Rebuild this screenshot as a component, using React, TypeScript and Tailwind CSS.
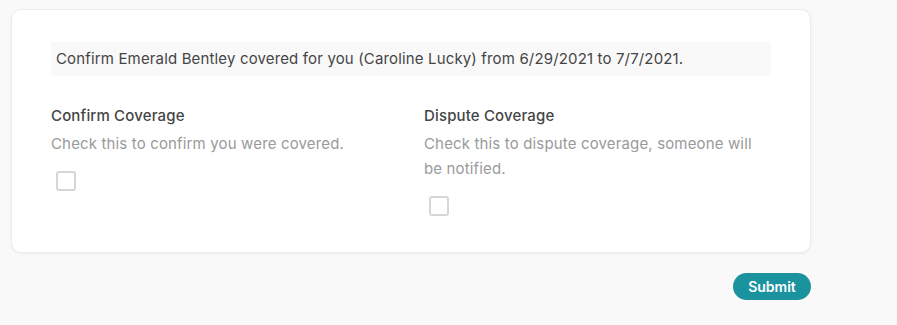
import React from 'react';

const App: React.FC = () => {
  return (
    <div className="min-h-screen w-full bg-[#f9f9f9] pl-[11px] pt-[9px] font-['Inter',sans-serif] tracking-[0.15px]">
      <div className="w-[800px]">
        <div className="rounded-[10px] border border-[#ececec] bg-white px-[39px] pt-[32px] pb-[36px] shadow-[0_1px_3px_rgba(0,0,0,0.05)]">
          <div className="h-[34px] flex items-center rounded-[3px] bg-[#f9f9f9] px-[5px] text-[15px] text-[#454545]">
            Confirm Emerald Bentley covered for you (Caroline Lucky) from 6/29/2021 to 7/7/2021.
          </div>

          <div className="mt-[28px] grid grid-cols-[373px_335px]">
            <div>
              <div className="text-[15px] leading-6 font-medium text-[#454545]">Confirm Coverage</div>
              <p className="mt-[3px] text-[15px] leading-[25px] text-[#9a9a9a]">
                Check this to confirm you were covered.
              </p>
              <input
                type="checkbox"
                className="mt-[15px] ml-[5px] block h-5 w-5 appearance-none rounded-[3px] border-2 border-[#d6d6d6] bg-white"
              />
            </div>
            <div>
              <div className="text-[15px] leading-6 font-medium text-[#454545]">Dispute Coverage</div>
              <p className="mt-[3px] text-[15px] leading-[25px] text-[#9a9a9a]">
                Check this to dispute coverage, someone will be notified.
              </p>
              <input
                type="checkbox"
                className="mt-[15px] ml-[5px] block h-5 w-5 appearance-none rounded-[3px] border-2 border-[#d6d6d6] bg-white"
              />
            </div>
          </div>
        </div>

        <div className="mt-[20px] flex justify-end">
          <button className="h-[27px] w-[78px] rounded-full bg-[#1b939f] text-[14px] font-semibold tracking-normal text-white">
            Submit
          </button>
        </div>
      </div>
    </div>
  );
};

export default App;
